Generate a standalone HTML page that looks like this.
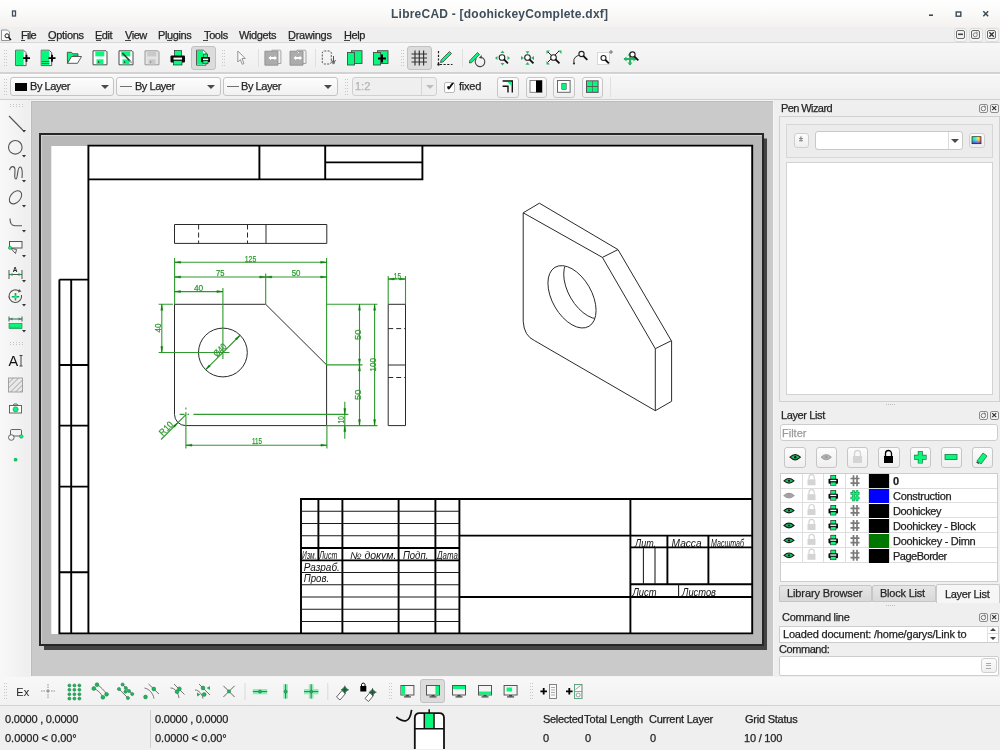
<!DOCTYPE html>
<html><head><meta charset="utf-8"><style>
*{margin:0;padding:0;box-sizing:border-box}
html,body{width:1000px;height:750px;overflow:hidden;background:#efefef;font-family:"Liberation Sans",sans-serif;font-size:11px;color:#2e2e2e}
.a{position:absolute}
.t{position:absolute;white-space:nowrap;line-height:1;will-change:transform;-webkit-text-stroke:0.25px currentColor}
.btn{position:absolute;border:1px solid #c6c6c6;border-radius:3px;background:linear-gradient(#fcfcfc,#efefef)}
.combo{position:absolute;border:1px solid #c4c4c4;border-radius:3px;background:linear-gradient(#fdfdfd,#f1f1f1)}
.arr{position:absolute;width:0;height:0;border-left:4px solid transparent;border-right:4px solid transparent;border-top:4px solid #4a4a4a}
.ul{position:absolute;height:1px;background:#555}
svg{position:absolute;overflow:visible}
</style></head><body>
<div class="a" style="left:0px;top:0px;width:1000px;height:27px;background:linear-gradient(#fefefe,#fbfbfa 40%,#f3f2f0)"></div>
<div class="t" id="t1" style="left:391.10px;top:8px;font-size:12px;font-weight:bold;color:#3f4e5c;-webkit-text-stroke:0;letter-spacing:0.232px">LibreCAD - [doohickeyComplete.dxf]</div>
<div class="a" style="left:0px;top:27px;width:1000px;height:15px;background:#efefef"></div>
<div class="a" style="left:0px;top:42px;width:1000px;height:1px;background:#d8d8d8"></div>
<div class="t" id="t2" style="left:20.64px;top:29.5px;font-size:11px;color:#262626;letter-spacing:-0.680px">File</div>
<div class="t" id="t3" style="left:48.00px;top:29.5px;font-size:11px;color:#262626;letter-spacing:-0.300px">Options</div>
<div class="t" id="t4" style="left:95.04px;top:29.5px;font-size:11px;color:#262626;letter-spacing:-0.480px">Edit</div>
<div class="t" id="t5" style="left:124.65px;top:29.5px;font-size:11px;color:#262626;letter-spacing:-0.450px">View</div>
<div class="t" id="t6" style="left:158.10px;top:29.5px;font-size:11px;color:#262626;letter-spacing:-0.400px">Plugins</div>
<div class="t" id="t7" style="left:203.65px;top:29.5px;font-size:11px;color:#262626;letter-spacing:-0.375px">Tools</div>
<div class="t" id="t8" style="left:239.00px;top:29.5px;font-size:11px;color:#262626;letter-spacing:-0.370px">Widgets</div>
<div class="t" id="t9" style="left:288.38px;top:29.5px;font-size:11px;color:#262626;letter-spacing:-0.275px">Drawings</div>
<div class="t" id="t10" style="left:343.70px;top:29.5px;font-size:11px;color:#262626;letter-spacing:-0.400px">Help</div>
<div class="ul" style="left:20.6px;top:40.2px;width:4.6px;height:1.1px;background:#444"></div>
<div class="ul" style="left:48.2px;top:40.2px;width:6.4px;height:1.1px;background:#444"></div>
<div class="ul" style="left:95.8px;top:40.2px;width:5px;height:1.1px;background:#444"></div>
<div class="ul" style="left:124.6px;top:40.2px;width:6px;height:1.1px;background:#444"></div>
<div class="ul" style="left:166.7px;top:40.2px;width:5.4px;height:1.1px;background:#444"></div>
<div class="ul" style="left:203px;top:40.2px;width:5.2px;height:1.1px;background:#444"></div>
<div class="ul" style="left:288.9px;top:40.2px;width:6px;height:1.1px;background:#444"></div>
<div class="ul" style="left:344.2px;top:40.2px;width:5.6px;height:1.1px;background:#444"></div>
<div class="a" style="left:0px;top:43px;width:1000px;height:29px;background:linear-gradient(#f7f7f7,#efefef)"></div>
<div class="a" style="left:0px;top:72px;width:1000px;height:1.5px;background:#d2d2d2"></div>
<div class="a" style="left:0px;top:73.5px;width:1000px;height:1px;background:#fdfdfd"></div>
<div class="a" style="left:0px;top:74.5px;width:1000px;height:24.5px;background:linear-gradient(#f7f7f7,#efefef)"></div>
<div class="a" style="left:0px;top:99px;width:1000px;height:1px;background:#cfcfcf"></div>
<div class="btn" style="left:191px;top:46px;width:25px;height:24px;background:#dcdcdc;border-color:#c2c2c2"></div>
<div class="btn" style="left:407px;top:46px;width:25px;height:24px;background:#dcdcdc;border-color:#c2c2c2"></div>
<div class="combo" style="left:10px;top:77px;width:104px;height:19px;"></div>
<div class="a" style="left:14.5px;top:82.5px;width:12.5px;height:8.5px;background:#050505"></div>
<div class="t" id="t11" style="left:30.00px;top:81px;font-size:11px;color:#262626;letter-spacing:-0.436px">By Layer</div>
<div class="arr" style="left:101px;top:85px;border-top-color:#4a4a4a"></div>
<div class="combo" style="left:115.5px;top:77px;width:105px;height:19px;"></div>
<div class="a" style="left:119.5px;top:86px;width:12px;height:1px;background:#707070"></div>
<div class="t" id="t12" style="left:134.52px;top:81px;font-size:11px;color:#262626;letter-spacing:-0.463px">By Layer</div>
<div class="arr" style="left:207px;top:85px;border-top-color:#4a4a4a"></div>
<div class="combo" style="left:222.5px;top:77px;width:115px;height:19px;"></div>
<div class="a" style="left:226.5px;top:86px;width:12px;height:1px;background:#707070"></div>
<div class="t" id="t13" style="left:241.38px;top:81px;font-size:11px;color:#262626;letter-spacing:-0.436px">By Layer</div>
<div class="arr" style="left:324px;top:85px;border-top-color:#4a4a4a"></div>
<div class="combo" style="left:352px;top:77px;width:84.5px;height:19px;background:#efefef;border-color:#d0d0d0"></div>
<div class="a" style="left:421px;top:78px;width:1px;height:17px;background:#d6d6d6"></div>
<div class="t" style="left:355px;top:81px;font-size:11px;color:#b4b4b4">1:2</div>
<div class="arr" style="left:425.5px;top:85px;border-top-color:#bdbdbd"></div>
<div class="a" style="left:444px;top:82px;width:11px;height:11px;background:#fff;border:1px solid #b8b8b8;border-radius:2px"></div>
<div class="t" style="left:445.5px;top:81px;font-size:11px;color:#111;font-weight:bold">&#10003;</div>
<div class="t" id="t14" style="left:459.00px;top:81px;font-size:11px;color:#262626;letter-spacing:-0.225px">fixed</div>
<div class="btn" style="left:497px;top:76.5px;width:21.5px;height:21px;"></div>
<div class="btn" style="left:525.5px;top:76.5px;width:21.5px;height:21px;"></div>
<div class="btn" style="left:553px;top:76.5px;width:21.5px;height:21px;"></div>
<div class="btn" style="left:581.5px;top:76.5px;width:21.5px;height:21px;"></div>
<div class="a" style="left:0px;top:100px;width:29.5px;height:577px;background:linear-gradient(to right,#f8f8f8,#eeeeee)"></div>
<div class="a" style="left:29.5px;top:100px;width:744px;height:577px;background:#f4f4f4"></div>
<div class="a" style="left:31px;top:101px;width:742px;height:575px;background:#bcbcbc"></div>
<div class="a" style="left:32px;top:102px;width:740.5px;height:573.5px;background:#cacaca"></div>
<svg style="left:31px;top:101px;will-change:transform" width="742" height="576" viewBox="31 101 742 576">
<rect x="44" y="138.5" width="723" height="511.5" fill="#444444"/>
<rect x="39" y="133" width="725" height="513" fill="#262626"/>
<rect x="41" y="135" width="721" height="509" fill="#d0d0d0"/>
<rect x="42" y="136" width="720" height="508" fill="#b8b8b8"/>
<rect x="51.3" y="146" width="701.5" height="488" fill="#ffffff"/>
<path d="M88.4,145.6 H752.2 V633.4 H88.4 Z M88.4,179.4 H422.4 V145.6 M259.4,145.6 V179.4 M325.2,145.6 V179.4 M325.2,162.4 H422.4 M59.4,279.6 H88.4 M59.4,279.6 V633.4 H88.4 M71.2,279.6 V633.4 M59.4,365 H88.4 M59.4,425.6 H88.4 M59.4,486.6 H88.4 M59.4,572.2 H88.4 M301,633.4 V499 H752.2 M342.4,499 V633.4 M398.6,499 V633.4 M435.4,499 V633.4 M459.4,499 V633.4 M630.4,499 V633.4 M318.4,499 V560.4 M301,548 H459.4 M301,560.4 H459.4 M459.4,535.6 H752.2 M459.4,597 H752.2 M630.4,547.4 H752.2 M630.4,584.2 H752.2 M667.4,535.6 V584.2 M708.4,535.6 V584.2" fill="none" stroke="#000" stroke-width="1.9"/>
<path d="M301,511.3 H459.4 M301,523.5 H459.4 M301,535.8 H459.4 M301,572.5 H459.4 M301,584.8 H459.4 M301,597 H459.4 M301,609.3 H459.4 M301,621.5 H459.4 M643.4,547.4 V584.2 M655,547.4 V584.2 M678.6,584.2 V597" fill="none" stroke="#1a1a1a" stroke-width="1.05"/>
<text x="302.1" y="559" textLength="14.299999999999955" lengthAdjust="spacingAndGlyphs" style="font-family:Liberation Sans,sans-serif;font-style:italic;fill:#111;font-size:10.5px">Изм.</text>
<text x="319.3" y="559" textLength="18.0" lengthAdjust="spacingAndGlyphs" style="font-family:Liberation Sans,sans-serif;font-style:italic;fill:#111;font-size:10.5px">Лист</text>
<text x="350.1" y="559" textLength="46.299999999999955" lengthAdjust="spacingAndGlyphs" style="font-family:Liberation Sans,sans-serif;font-style:italic;fill:#111;font-size:10px">№  докум.</text>
<text x="402.9" y="559" textLength="25.400000000000034" lengthAdjust="spacingAndGlyphs" style="font-family:Liberation Sans,sans-serif;font-style:italic;fill:#111;font-size:10px">Подп.</text>
<text x="437" y="559" textLength="20.80000000000001" lengthAdjust="spacingAndGlyphs" style="font-family:Liberation Sans,sans-serif;font-style:italic;fill:#111;font-size:10.5px">Дата</text>
<text x="303.7" y="570.5" textLength="36.10000000000002" lengthAdjust="spacingAndGlyphs" style="font-family:Liberation Sans,sans-serif;font-style:italic;fill:#111;font-size:10.5px">Разраб.</text>
<text x="303.7" y="582" textLength="25.400000000000034" lengthAdjust="spacingAndGlyphs" style="font-family:Liberation Sans,sans-serif;font-style:italic;fill:#111;font-size:10.5px">Пров.</text>
<text x="635" y="546.5" textLength="21" lengthAdjust="spacingAndGlyphs" style="font-family:Liberation Sans,sans-serif;font-style:italic;fill:#111;font-size:10px">Лит.</text>
<text x="671.6" y="546.5" textLength="30.0" lengthAdjust="spacingAndGlyphs" style="font-family:Liberation Sans,sans-serif;font-style:italic;fill:#111;font-size:10px">Масса</text>
<text x="711" y="546.5" textLength="33" lengthAdjust="spacingAndGlyphs" style="font-family:Liberation Sans,sans-serif;font-style:italic;fill:#111;font-size:10px">Масштаб</text>
<text x="632.4" y="595.8" textLength="24.200000000000045" lengthAdjust="spacingAndGlyphs" style="font-family:Liberation Sans,sans-serif;font-style:italic;fill:#111;font-size:10px">Лист</text>
<text x="682" y="595.8" textLength="34" lengthAdjust="spacingAndGlyphs" style="font-family:Liberation Sans,sans-serif;font-style:italic;fill:#111;font-size:10px">Листов</text>
<path d="M174.5,224.5 H326.8 V243.4 H174.5 Z M266,224.5 V243.4 M174.5,304.3 H265.7 L326.6,364.9 V425.6 H185.6 A11.2,11.2 0 0 1 174.5,414.4 Z M388.2,304.3 H405.5 V425.6 H388.2 Z M388.2,365 H405.5 M523.2,212.8 L539.4,203.2 L618,249.6 L602.4,257.4 Z M602.4,257.4 L655.3,348.7 L671.3,340.7 L618,249.6 M655.3,348.7 V410.7 L671.6,401.3 V340.7 M523.2,212.8 V321.3 Q524,336 534.7,340.7 L655.3,410.7" fill="none" stroke="#2a2a2a" stroke-width="1.0"/>
<circle cx="222.9" cy="352.5" r="24.4" fill="none" stroke="#2a2a2a" stroke-width="1.0"/>
<path d="M198.6,224.5 V243.4 M247.5,224.5 V243.4 M388.2,328.6 H405.5 M388.2,377.5 H405.5" fill="none" stroke="#2a2a2a" stroke-width="1.0" stroke-dasharray="5,3"/>
<defs><clipPath id="ec"><circle r="22.3" transform="matrix(1.056,0.6,0,1.229,572,296.8)"/></clipPath></defs>
<g transform="matrix(1.056,0.6,0,1.229,572,296.8)"><circle r="22.8" fill="none" stroke="#2a2a2a" stroke-width="1.0" vector-effect="non-scaling-stroke"/></g>
<g clip-path="url(#ec)"><g transform="matrix(1.056,0.6,0,1.229,587.8,287.8)"><circle r="22.8" fill="none" stroke="#2a2a2a" stroke-width="1.0" vector-effect="non-scaling-stroke"/></g></g>
<path d="M174.6,258 V304 M326.6,258 V364.9 M174.6,262.3 H326.6 M174.6,277 H326.6 M265.7,273.5 V304.3 M174.6,291.6 H222.9 M222.9,288 V359 M158.6,304.3 H173 M158.6,352.5 H229.5 M161.8,304.3 V352.5 M326.6,304.3 H377.5 M326.6,364.9 H362.5 M326.6,425.6 H377.5 M359.5,304.3 V425.6 M374.6,304.3 V425.6 M193.5,414.4 H348.3 M344.8,401.8 V438.7 M185.9,416 V448.5 M326.9,425.6 V448.5 M185.9,445.2 H326.9 M161,439.5 L185.7,414.8 M179.7,414.4 H184.5 M187.5,414.4 H189 M185.9,407.5 V409.5 M185.9,412 V416 M205.4,369.9 L240.4,335 M388.2,276 V304.3 M405.5,276 V304.3 M388.2,279 H405.5" fill="none" stroke="#2f9a2f" stroke-width="1.1"/>
<path d="M174.6,262.3 L180.6,261.3 L180.6,263.3 Z M326.6,262.3 L320.6,261.3 L320.6,263.3 Z M174.6,277 L180.6,276.0 L180.6,278.0 Z M265.7,277 L259.7,276.0 L259.7,278.0 Z M174.6,291.6 L180.6,290.6 L180.6,292.6 Z M222.9,291.6 L216.9,290.6 L216.9,292.6 Z M185.9,445.2 L191.9,444.2 L191.9,446.2 Z M326.9,445.2 L320.9,444.2 L320.9,446.2 Z M388.2,279 L394.2,278.0 L394.2,280.0 Z M405.5,279 L399.5,278.0 L399.5,280.0 Z M265.7,277 L271.7,276.0 L271.7,278.0 Z M326.6,277 L320.6,276.0 L320.6,278.0 Z M161.8,304.3 L160.8,310.3 L162.8,310.3 Z M161.8,352.5 L160.8,346.5 L162.8,346.5 Z M359.5,304.3 L358.5,310.3 L360.5,310.3 Z M359.5,364.9 L358.5,358.9 L360.5,358.9 Z M359.5,364.9 L358.5,370.9 L360.5,370.9 Z M359.5,425.6 L358.5,419.6 L360.5,419.6 Z M374.6,304.3 L373.6,310.3 L375.6,310.3 Z M374.6,425.6 L373.6,419.6 L375.6,419.6 Z M344.8,414.4 L343.8,408.4 L345.8,408.4 Z M344.8,425.6 L343.8,431.6 L345.8,431.6 Z M178.20,422.30 L173.25,425.84 L174.66,427.25 Z M240.20,335.10 L235.25,338.64 L236.66,340.05 Z M205.50,369.80 L210.45,366.26 L209.04,364.85 Z" fill="#0b820b" stroke="#0b820b" stroke-width="0.4"/>
<text transform="translate(250.5 258.3) rotate(0)" x="0" y="3.3" text-anchor="middle" textLength="11.5" lengthAdjust="spacingAndGlyphs" style="font-family:Liberation Sans,sans-serif;font-size:9.4px;fill:#2f9a2f;stroke:#2f9a2f;stroke-width:0.25">125</text>
<text transform="translate(220.2 272.8) rotate(0)" x="0" y="3.3" text-anchor="middle" textLength="8.4" lengthAdjust="spacingAndGlyphs" style="font-family:Liberation Sans,sans-serif;font-size:9.4px;fill:#2f9a2f;stroke:#2f9a2f;stroke-width:0.25">75</text>
<text transform="translate(296.1 272.8) rotate(0)" x="0" y="3.3" text-anchor="middle" textLength="8.8" lengthAdjust="spacingAndGlyphs" style="font-family:Liberation Sans,sans-serif;font-size:9.4px;fill:#2f9a2f;stroke:#2f9a2f;stroke-width:0.25">50</text>
<text transform="translate(198.6 287.2) rotate(0)" x="0" y="3.3" text-anchor="middle" textLength="9.3" lengthAdjust="spacingAndGlyphs" style="font-family:Liberation Sans,sans-serif;font-size:9.4px;fill:#2f9a2f;stroke:#2f9a2f;stroke-width:0.25">40</text>
<text transform="translate(397.4 275.2) rotate(0)" x="0" y="3.3" text-anchor="middle" textLength="7.2" lengthAdjust="spacingAndGlyphs" style="font-family:Liberation Sans,sans-serif;font-size:9.4px;fill:#2f9a2f;stroke:#2f9a2f;stroke-width:0.25">15</text>
<text transform="translate(257 440.5) rotate(0)" x="0" y="3.3" text-anchor="middle" textLength="9.9" lengthAdjust="spacingAndGlyphs" style="font-family:Liberation Sans,sans-serif;font-size:9.4px;fill:#2f9a2f;stroke:#2f9a2f;stroke-width:0.25">115</text>
<text transform="translate(157.7 328.1) rotate(-90)" x="0" y="3.3" text-anchor="middle" textLength="9" lengthAdjust="spacingAndGlyphs" style="font-family:Liberation Sans,sans-serif;font-size:9.4px;fill:#2f9a2f;stroke:#2f9a2f;stroke-width:0.25">40</text>
<text transform="translate(357.2 334.7) rotate(-90)" x="0" y="3.3" text-anchor="middle" textLength="10.5" lengthAdjust="spacingAndGlyphs" style="font-family:Liberation Sans,sans-serif;font-size:9.4px;fill:#2f9a2f;stroke:#2f9a2f;stroke-width:0.25">50</text>
<text transform="translate(357.2 394.7) rotate(-90)" x="0" y="3.3" text-anchor="middle" textLength="10.5" lengthAdjust="spacingAndGlyphs" style="font-family:Liberation Sans,sans-serif;font-size:9.4px;fill:#2f9a2f;stroke:#2f9a2f;stroke-width:0.25">50</text>
<text transform="translate(372.5 364.7) rotate(-90)" x="0" y="3.3" text-anchor="middle" textLength="13.5" lengthAdjust="spacingAndGlyphs" style="font-family:Liberation Sans,sans-serif;font-size:9.4px;fill:#2f9a2f;stroke:#2f9a2f;stroke-width:0.25">100</text>
<text transform="translate(340.6 419.8) rotate(-90)" x="0" y="3.3" text-anchor="middle" textLength="7.2" lengthAdjust="spacingAndGlyphs" style="font-family:Liberation Sans,sans-serif;font-size:9.4px;fill:#2f9a2f;stroke:#2f9a2f;stroke-width:0.25">10</text>
<text transform="translate(165.7 428) rotate(-45)" x="0" y="3.75" text-anchor="middle" textLength="15.5" lengthAdjust="spacingAndGlyphs" style="font-family:Liberation Sans,sans-serif;font-size:9.4px;fill:#2f9a2f;stroke:#2f9a2f;stroke-width:0.25">R10</text>
<text transform="translate(219.6 349.8) rotate(-45)" x="0" y="3.5" text-anchor="middle" textLength="14.5" lengthAdjust="spacingAndGlyphs" style="font-family:Liberation Sans,sans-serif;font-size:9.4px;fill:#2f9a2f;stroke:#2f9a2f;stroke-width:0.25">Ø40</text>
</svg>
<div class="a" style="left:774px;top:100px;width:226px;height:577px;background:#efefef"></div>
<div class="a" style="left:953.5px;top:27.5px;width:13.5px;height:14px;border:1px solid #dadada;border-radius:3px;background:#f7f7f7"></div>
<div class="a" style="left:956.2px;top:30px;width:8.4px;height:8.7px;border:1.2px solid #666;border-radius:2px;background:#f4f4f4"></div>
<div class="a" style="left:969px;top:27.5px;width:13.5px;height:14px;border:1px solid #dadada;border-radius:3px;background:#f7f7f7"></div>
<div class="a" style="left:971.2px;top:30px;width:8.4px;height:8.7px;border:1.2px solid #666;border-radius:2px;background:#f4f4f4"></div>
<div class="a" style="left:985px;top:27.5px;width:13.5px;height:14px;border:1px solid #dadada;border-radius:3px;background:#f7f7f7"></div>
<div class="a" style="left:987.4px;top:30px;width:8.4px;height:8.7px;border:1.2px solid #666;border-radius:2px;background:#f4f4f4"></div>
<div class="t" id="t15" style="left:781.35px;top:102.5px;font-size:11px;color:#262626;letter-spacing:-0.583px">Pen Wizard</div>
<div class="a" style="left:979px;top:104px;width:8.6px;height:8.6px;border:1px solid #8c8c8c;border-radius:2px;background:#f4f4f4"></div>
<div class="a" style="left:990px;top:104px;width:8.6px;height:8.6px;border:1px solid #8c8c8c;border-radius:2px;background:#f4f4f4"></div>
<div class="a" style="left:778.5px;top:116px;width:221px;height:286px;border:1px solid #d0d0d0;background:#efefef"></div>
<div class="a" style="left:786px;top:123.5px;width:206.5px;height:34.5px;border:1px solid #d6d6d6;background:#ececec"></div>
<div class="btn" style="left:794px;top:132.5px;width:15px;height:15px;border-color:#cfcfcf"></div>
<div class="t" style="left:798.5px;top:135px;font-size:7px;color:#666">&#177;</div>
<div class="a" style="left:814.5px;top:131px;width:148.5px;height:19px;background:#fff;border:1px solid #c8c8c8;border-radius:3px"></div>
<div class="a" style="left:947.5px;top:132px;width:1px;height:17px;background:#dcdcdc"></div>
<div class="arr" style="left:950.5px;top:139px;border-top-color:#4a4a4a"></div>
<div class="btn" style="left:969px;top:132.5px;width:15.5px;height:15.5px;border-color:#cfcfcf"></div>
<div class="a" style="left:786px;top:162px;width:206.5px;height:232.5px;background:#fff;border:1px solid #d2d2d2"></div>
<div class="a" style="left:886px;top:404px;width:1px;height:1px;background:#bcbcbc"></div>
<div class="a" style="left:888px;top:404px;width:1px;height:1px;background:#bcbcbc"></div>
<div class="a" style="left:890px;top:404px;width:1px;height:1px;background:#bcbcbc"></div>
<div class="a" style="left:892px;top:404px;width:1px;height:1px;background:#bcbcbc"></div>
<div class="a" style="left:894px;top:404px;width:1px;height:1px;background:#bcbcbc"></div>
<div class="t" id="t16" style="left:781.35px;top:410px;font-size:11px;color:#262626;letter-spacing:-0.383px">Layer List</div>
<div class="a" style="left:979px;top:411px;width:8.6px;height:8.6px;border:1px solid #8c8c8c;border-radius:2px;background:#f4f4f4"></div>
<div class="a" style="left:990px;top:411px;width:8.6px;height:8.6px;border:1px solid #8c8c8c;border-radius:2px;background:#f4f4f4"></div>
<div class="a" style="left:780px;top:424px;width:218px;height:17px;background:#fff;border:1px solid #cdcdcd;border-radius:3px"></div>
<div class="t" id="t17" style="left:781.76px;top:427.5px;font-size:11px;color:#9a9a9a;letter-spacing:0.000px">Filter</div>
<div class="btn" style="left:784.3px;top:446.6px;width:21.3px;height:21px;"></div>
<div class="btn" style="left:815.5px;top:446.6px;width:21.5px;height:21px;"></div>
<div class="btn" style="left:847px;top:446.6px;width:21.4px;height:21px;"></div>
<div class="btn" style="left:878px;top:446.6px;width:21.5px;height:21px;"></div>
<div class="btn" style="left:909.6px;top:446.6px;width:21.4px;height:21px;"></div>
<div class="btn" style="left:940.6px;top:446.6px;width:21.4px;height:21px;"></div>
<div class="btn" style="left:972.4px;top:446.6px;width:20.6px;height:21px;"></div>
<div class="a" style="left:780px;top:473px;width:218px;height:109px;background:#fff;border:1px solid #cdcdcd"></div>
<div class="a" style="left:781px;top:487.5px;width:216px;height:1px;background:#dedede"></div>
<div class="a" style="left:801.5px;top:473.5px;width:1px;height:15px;background:#dedede"></div>
<div class="a" style="left:823.4px;top:473.5px;width:1px;height:15px;background:#dedede"></div>
<div class="a" style="left:845.4px;top:473.5px;width:1px;height:15px;background:#dedede"></div>
<div class="a" style="left:867.7px;top:473.5px;width:1px;height:15px;background:#dedede"></div>
<div class="a" style="left:889.3px;top:473.5px;width:1px;height:15px;background:#dedede"></div>
<div class="a" style="left:868.5px;top:474.0px;width:20.5px;height:14px;background:#000"></div>
<div class="t" style="left:892.5px;top:476.0px;font-size:11px;color:#1e1e1e;font-weight:bold">0</div>
<div class="a" style="left:781px;top:502.4px;width:216px;height:1px;background:#dedede"></div>
<div class="a" style="left:801.5px;top:488.4px;width:1px;height:15px;background:#dedede"></div>
<div class="a" style="left:823.4px;top:488.4px;width:1px;height:15px;background:#dedede"></div>
<div class="a" style="left:845.4px;top:488.4px;width:1px;height:15px;background:#dedede"></div>
<div class="a" style="left:867.7px;top:488.4px;width:1px;height:15px;background:#dedede"></div>
<div class="a" style="left:889.3px;top:488.4px;width:1px;height:15px;background:#dedede"></div>
<div class="a" style="left:868.5px;top:488.9px;width:20.5px;height:14px;background:#0000ff"></div>
<div class="t" id="t18" style="left:892.65px;top:490.9px;font-size:11px;color:#1e1e1e;;letter-spacing:-0.276px">Construction</div>
<div class="a" style="left:781px;top:517.3px;width:216px;height:1px;background:#dedede"></div>
<div class="a" style="left:801.5px;top:503.3px;width:1px;height:15px;background:#dedede"></div>
<div class="a" style="left:823.4px;top:503.3px;width:1px;height:15px;background:#dedede"></div>
<div class="a" style="left:845.4px;top:503.3px;width:1px;height:15px;background:#dedede"></div>
<div class="a" style="left:867.7px;top:503.3px;width:1px;height:15px;background:#dedede"></div>
<div class="a" style="left:889.3px;top:503.3px;width:1px;height:15px;background:#dedede"></div>
<div class="a" style="left:868.5px;top:503.8px;width:20.5px;height:14px;background:#000"></div>
<div class="t" id="t19" style="left:892.50px;top:505.8px;font-size:11px;color:#1e1e1e;;letter-spacing:-0.347px">Doohickey</div>
<div class="a" style="left:781px;top:532.2px;width:216px;height:1px;background:#dedede"></div>
<div class="a" style="left:801.5px;top:518.2px;width:1px;height:15px;background:#dedede"></div>
<div class="a" style="left:823.4px;top:518.2px;width:1px;height:15px;background:#dedede"></div>
<div class="a" style="left:845.4px;top:518.2px;width:1px;height:15px;background:#dedede"></div>
<div class="a" style="left:867.7px;top:518.2px;width:1px;height:15px;background:#dedede"></div>
<div class="a" style="left:889.3px;top:518.2px;width:1px;height:15px;background:#dedede"></div>
<div class="a" style="left:868.5px;top:518.7px;width:20.5px;height:14px;background:#000"></div>
<div class="t" id="t20" style="left:892.50px;top:520.7px;font-size:11px;color:#1e1e1e;;letter-spacing:-0.328px">Doohickey - Block</div>
<div class="a" style="left:781px;top:547.1px;width:216px;height:1px;background:#dedede"></div>
<div class="a" style="left:801.5px;top:533.1px;width:1px;height:15px;background:#dedede"></div>
<div class="a" style="left:823.4px;top:533.1px;width:1px;height:15px;background:#dedede"></div>
<div class="a" style="left:845.4px;top:533.1px;width:1px;height:15px;background:#dedede"></div>
<div class="a" style="left:867.7px;top:533.1px;width:1px;height:15px;background:#dedede"></div>
<div class="a" style="left:889.3px;top:533.1px;width:1px;height:15px;background:#dedede"></div>
<div class="a" style="left:868.5px;top:533.6px;width:20.5px;height:14px;background:#007800"></div>
<div class="t" id="t21" style="left:892.50px;top:535.6px;font-size:11px;color:#1e1e1e;;letter-spacing:-0.278px">Doohickey - Dimn</div>
<div class="a" style="left:781px;top:562.0px;width:216px;height:1px;background:#dedede"></div>
<div class="a" style="left:801.5px;top:548.0px;width:1px;height:15px;background:#dedede"></div>
<div class="a" style="left:823.4px;top:548.0px;width:1px;height:15px;background:#dedede"></div>
<div class="a" style="left:845.4px;top:548.0px;width:1px;height:15px;background:#dedede"></div>
<div class="a" style="left:867.7px;top:548.0px;width:1px;height:15px;background:#dedede"></div>
<div class="a" style="left:889.3px;top:548.0px;width:1px;height:15px;background:#dedede"></div>
<div class="a" style="left:868.5px;top:548.5px;width:20.5px;height:14px;background:#000"></div>
<div class="t" id="t22" style="left:892.50px;top:550.5px;font-size:11px;color:#1e1e1e;;letter-spacing:-0.493px">PageBorder</div>
<div class="a" style="left:779px;top:584.5px;width:93px;height:17px;background:linear-gradient(#e6e6e6,#d8d8d8);border:1px solid #c6c6c6;border-radius:2px 2px 0 0"></div>
<div class="a" style="left:872px;top:584.5px;width:64px;height:17px;background:linear-gradient(#e6e6e6,#d8d8d8);border:1px solid #c6c6c6;border-radius:2px 2px 0 0"></div>
<div class="a" style="left:935.5px;top:583.5px;width:64.5px;height:19.5px;background:#f6f6f6;border:1px solid #cacaca;border-bottom:none;border-radius:2px 2px 0 0"></div>
<div class="t" id="t23" style="left:786.54px;top:587.5px;font-size:11px;color:#262626;letter-spacing:-0.116px">Library Browser</div>
<div class="t" id="t24" style="left:879.78px;top:587.5px;font-size:11px;color:#262626;letter-spacing:-0.216px">Block List</div>
<div class="t" id="t25" style="left:944.59px;top:589px;font-size:11px;color:#262626;letter-spacing:-0.334px">Layer List</div>
<div class="a" style="left:886px;top:605px;width:1px;height:1px;background:#bcbcbc"></div>
<div class="a" style="left:888px;top:605px;width:1px;height:1px;background:#bcbcbc"></div>
<div class="a" style="left:890px;top:605px;width:1px;height:1px;background:#bcbcbc"></div>
<div class="a" style="left:892px;top:605px;width:1px;height:1px;background:#bcbcbc"></div>
<div class="a" style="left:894px;top:605px;width:1px;height:1px;background:#bcbcbc"></div>
<div class="t" id="t26" style="left:781.65px;top:611.5px;font-size:11px;color:#262626;letter-spacing:-0.286px">Command line</div>
<div class="a" style="left:979px;top:613px;width:8.6px;height:8.6px;border:1px solid #8c8c8c;border-radius:2px;background:#f4f4f4"></div>
<div class="a" style="left:990px;top:613px;width:8.6px;height:8.6px;border:1px solid #8c8c8c;border-radius:2px;background:#f4f4f4"></div>
<div class="a" style="left:779px;top:626px;width:220px;height:17px;background:#fff;border:1px solid #cdcdcd"></div>
<div class="t" id="t27" style="left:782.70px;top:629px;font-size:11px;color:#1e1e1e;letter-spacing:-0.188px">Loaded document: /home/garys/Link to</div>
<div class="a" style="left:987px;top:627px;width:11px;height:15px;background:#fff;border-left:1px solid #e2e2e2"></div>
<div class="a" style="left:988px;top:632.8px;width:10px;height:1.6px;background:#d8d8d8"></div>
<div class="arr" style="left:990px;top:627.5px;border-left-width:3px;border-right-width:3px;border-top:none;border-bottom:3px solid #444"></div>
<div class="arr" style="left:990px;top:636.5px;border-left-width:3px;border-right-width:3px;border-top-width:3px;border-top-color:#444"></div>
<div class="t" id="t28" style="left:779.12px;top:644px;font-size:11px;color:#262626;letter-spacing:-0.438px">Command:</div>
<div class="a" style="left:779px;top:656px;width:220px;height:20px;background:#fff;border:1px solid #cdcdcd;border-radius:2px"></div>
<div class="btn" style="left:981.2px;top:658px;width:15.6px;height:15.2px;border-color:#cfcfcf"></div>
<div class="a" style="left:986px;top:662.5px;width:5px;height:1px;background:#aaa"></div>
<div class="a" style="left:986px;top:665px;width:5px;height:1px;background:#aaa"></div>
<div class="a" style="left:986px;top:667.5px;width:5px;height:1px;background:#aaa"></div>
<div class="a" style="left:0px;top:677px;width:1000px;height:28px;background:linear-gradient(#f8f8f8,#f1f1f1)"></div>
<div class="a" style="left:0px;top:705px;width:1000px;height:1px;background:#d3d3d3"></div>
<div class="a" style="left:0px;top:706px;width:1000px;height:44px;background:#efefef"></div>
<div class="btn" style="left:420.4px;top:679.4px;width:24.6px;height:23.6px;background:#dcdcdc;border-color:#c2c2c2"></div>
<div class="t" id="t29" style="left:5.00px;top:713.5px;font-size:11px;color:#222;letter-spacing:-0.222px">0.0000 , 0.0000</div>
<div class="t" id="t30" style="left:5.00px;top:732.5px;font-size:11px;color:#222;letter-spacing:-0.017px">0.0000 &lt; 0.00°</div>
<div class="a" style="left:150px;top:710px;width:1px;height:38px;background:#cfcfcf"></div>
<div class="t" id="t31" style="left:155.00px;top:713.5px;font-size:11px;color:#222;letter-spacing:-0.222px">0.0000 , 0.0000</div>
<div class="t" id="t32" style="left:155.00px;top:732.5px;font-size:11px;color:#222;letter-spacing:-0.017px">0.0000 &lt; 0.00°</div>
<div class="t" id="t33" style="left:542.64px;top:713.5px;font-size:11px;color:#222;letter-spacing:-0.311px">Selected</div>
<div class="t" id="t34" style="left:584.30px;top:713.5px;font-size:11px;color:#222;letter-spacing:-0.065px">Total Length</div>
<div class="t" id="t35" style="left:649.43px;top:713.5px;font-size:11px;color:#222;letter-spacing:-0.254px">Current Layer</div>
<div class="t" id="t36" style="left:744.65px;top:713.5px;font-size:11px;color:#222;letter-spacing:-0.237px">Grid Status</div>
<div class="t" style="left:543px;top:733px;font-size:11px;color:#222">0</div>
<div class="t" style="left:584.5px;top:733px;font-size:11px;color:#222">0</div>
<div class="t" style="left:650px;top:733px;font-size:11px;color:#222">0</div>
<div class="t" id="t37" style="left:744.35px;top:733px;font-size:11px;color:#222;letter-spacing:-0.207px">10 / 100</div>
<svg style="left:0;top:0" width="1000" height="750" viewBox="0 0 1000 750">
<rect x="4" y="50" width="1" height="1" fill="#c8c8c8"/><rect x="6" y="50" width="1" height="1" fill="#c8c8c8"/>
<rect x="4" y="53" width="1" height="1" fill="#c8c8c8"/><rect x="6" y="53" width="1" height="1" fill="#c8c8c8"/>
<rect x="4" y="56" width="1" height="1" fill="#c8c8c8"/><rect x="6" y="56" width="1" height="1" fill="#c8c8c8"/>
<rect x="4" y="59" width="1" height="1" fill="#c8c8c8"/><rect x="6" y="59" width="1" height="1" fill="#c8c8c8"/>
<rect x="4" y="62" width="1" height="1" fill="#c8c8c8"/><rect x="6" y="62" width="1" height="1" fill="#c8c8c8"/>
<rect x="4" y="65" width="1" height="1" fill="#c8c8c8"/><rect x="6" y="65" width="1" height="1" fill="#c8c8c8"/>
<rect x="222" y="50" width="1" height="1" fill="#c8c8c8"/><rect x="224" y="50" width="1" height="1" fill="#c8c8c8"/>
<rect x="222" y="53" width="1" height="1" fill="#c8c8c8"/><rect x="224" y="53" width="1" height="1" fill="#c8c8c8"/>
<rect x="222" y="56" width="1" height="1" fill="#c8c8c8"/><rect x="224" y="56" width="1" height="1" fill="#c8c8c8"/>
<rect x="222" y="59" width="1" height="1" fill="#c8c8c8"/><rect x="224" y="59" width="1" height="1" fill="#c8c8c8"/>
<rect x="222" y="62" width="1" height="1" fill="#c8c8c8"/><rect x="224" y="62" width="1" height="1" fill="#c8c8c8"/>
<rect x="222" y="65" width="1" height="1" fill="#c8c8c8"/><rect x="224" y="65" width="1" height="1" fill="#c8c8c8"/>
<rect x="401" y="50" width="1" height="1" fill="#c8c8c8"/><rect x="403" y="50" width="1" height="1" fill="#c8c8c8"/>
<rect x="401" y="53" width="1" height="1" fill="#c8c8c8"/><rect x="403" y="53" width="1" height="1" fill="#c8c8c8"/>
<rect x="401" y="56" width="1" height="1" fill="#c8c8c8"/><rect x="403" y="56" width="1" height="1" fill="#c8c8c8"/>
<rect x="401" y="59" width="1" height="1" fill="#c8c8c8"/><rect x="403" y="59" width="1" height="1" fill="#c8c8c8"/>
<rect x="401" y="62" width="1" height="1" fill="#c8c8c8"/><rect x="403" y="62" width="1" height="1" fill="#c8c8c8"/>
<rect x="401" y="65" width="1" height="1" fill="#c8c8c8"/><rect x="403" y="65" width="1" height="1" fill="#c8c8c8"/>
<rect x="4" y="79" width="1" height="1" fill="#c8c8c8"/><rect x="6" y="79" width="1" height="1" fill="#c8c8c8"/>
<rect x="4" y="82" width="1" height="1" fill="#c8c8c8"/><rect x="6" y="82" width="1" height="1" fill="#c8c8c8"/>
<rect x="4" y="85" width="1" height="1" fill="#c8c8c8"/><rect x="6" y="85" width="1" height="1" fill="#c8c8c8"/>
<rect x="4" y="88" width="1" height="1" fill="#c8c8c8"/><rect x="6" y="88" width="1" height="1" fill="#c8c8c8"/>
<rect x="4" y="91" width="1" height="1" fill="#c8c8c8"/><rect x="6" y="91" width="1" height="1" fill="#c8c8c8"/>
<rect x="4" y="94" width="1" height="1" fill="#c8c8c8"/><rect x="6" y="94" width="1" height="1" fill="#c8c8c8"/>
<rect x="345" y="79" width="1" height="1" fill="#c8c8c8"/><rect x="347" y="79" width="1" height="1" fill="#c8c8c8"/>
<rect x="345" y="82" width="1" height="1" fill="#c8c8c8"/><rect x="347" y="82" width="1" height="1" fill="#c8c8c8"/>
<rect x="345" y="85" width="1" height="1" fill="#c8c8c8"/><rect x="347" y="85" width="1" height="1" fill="#c8c8c8"/>
<rect x="345" y="88" width="1" height="1" fill="#c8c8c8"/><rect x="347" y="88" width="1" height="1" fill="#c8c8c8"/>
<rect x="345" y="91" width="1" height="1" fill="#c8c8c8"/><rect x="347" y="91" width="1" height="1" fill="#c8c8c8"/>
<rect x="345" y="94" width="1" height="1" fill="#c8c8c8"/><rect x="347" y="94" width="1" height="1" fill="#c8c8c8"/>
<rect x="258" y="49" width="1" height="18" fill="#e0e0e0"/>
<rect x="315" y="49" width="1" height="18" fill="#e0e0e0"/>
<rect x="462" y="49" width="1" height="18" fill="#e0e0e0"/>
<rect x="610" y="77" width="1" height="20" fill="#e0e0e0"/>
<path d="M15.6,50.2 H23.6 L26.1,52.7 V65.60000000000001 H15.6 Z" fill="#fff" stroke="#4a4a4a" stroke-width="0.9"/>
<rect x="16.1" y="50.7" width="7.6" height="14.4" fill="#0af77d"/>
<path d="M23,58.2 H30 M26.5,54.7 V61.7" stroke="#000" stroke-width="1.8"/>
<path d="M41.2,50.2 H49.2 L51.7,52.7 V65.60000000000001 H41.2 Z" fill="#fff" stroke="#4a4a4a" stroke-width="0.9"/>
<rect x="41.7" y="50.7" width="7.6" height="14.4" fill="#0af77d"/>
<rect x="41.7" y="61" width="7.6" height="1" fill="#0a8a40"/><rect x="41.7" y="63" width="7.6" height="1" fill="#0a8a40"/>
<path d="M48.5,58.2 H55.5 M52,54.7 V61.7" stroke="#000" stroke-width="1.8"/>
<path d="M67.3,52.3 H71.5 L72.8,53.8 H78 V56 H73 L67.5,63.3 Z" fill="#0af77d" stroke="#4a4a4a" stroke-width="0.9"/>
<path d="M67.5,63.3 L71.5,56.5 H81.5 L77.5,63.3 Z" fill="#fff" stroke="#4a4a4a" stroke-width="0.9"/>
<path d="M93,50.8 H106 L107,51.8 V64.8 H93 Z" fill="#fff" stroke="#4a4a4a" stroke-width="1"/>
<rect x="95.3" y="51.4" width="9" height="5" fill="#0af77d"/>
<rect x="96.5" y="59.3" width="7" height="5" fill="#0af77d"/>
<rect x="98" y="61.0" width="1.2" height="2" fill="#4a4a4a"/>
<path d="M119,50.8 H132 L133,51.8 V64.8 H119 Z" fill="#fff" stroke="#4a4a4a" stroke-width="1"/>
<rect x="121.3" y="51.4" width="9" height="5" fill="#0af77d"/>
<rect x="122.5" y="59.3" width="7" height="5" fill="#0af77d"/>
<rect x="124" y="61.0" width="1.2" height="2" fill="#4a4a4a"/>
<path d="M122.3,53 L130.5,61.5" stroke="#333" stroke-width="1.6"/><path d="M129.5,60.5 L131.8,63" stroke="#aaa" stroke-width="1.4"/>
<path d="M145,50.8 H158 L159,51.8 V64.8 H145 Z" fill="#e4e4e4" stroke="#9a9a9a" stroke-width="1"/>
<rect x="147.3" y="51.4" width="9" height="5" fill="#c9c9c9"/>
<rect x="148.5" y="59.3" width="7" height="5" fill="#c9c9c9"/>
<rect x="150" y="61.0" width="1.2" height="2" fill="#9a9a9a"/>
<rect x="174.5" y="50.5" width="7" height="6" fill="#0af77d" stroke="#111" stroke-width="0.6"/>
<rect x="170.5" y="55.5" width="14.5" height="7" rx="1" fill="#0b0b0b"/>
<rect x="173.5" y="57.6" width="8.5" height="2" fill="#fff"/>
<rect x="173.5" y="60.5" width="8.5" height="4.5" fill="#0af77d" stroke="#111" stroke-width="0.6"/>
<path d="M196.5,50.2 H203.5 L206.0,52.7 V65.2 H196.5 Z" fill="#fff" stroke="#4a4a4a" stroke-width="0.9"/>
<rect x="197.0" y="50.7" width="6" height="14" fill="#0af77d"/>
<rect x="203.5" y="54" width="4" height="3.5" fill="#0af77d" stroke="#111" stroke-width="0.6"/>
<rect x="201" y="57" width="9" height="5.2" rx="0.8" fill="#0b0b0b"/>
<rect x="203" y="58.6" width="5.2" height="1.4" fill="#fff"/>
<rect x="203" y="60.4" width="5" height="3.4" fill="#0af77d" stroke="#111" stroke-width="0.5"/>
<path d="M237.8,51 L245.3,58.5 H242 L244,63.5 L242.3,64.3 L240.3,59.5 L237.8,62 Z" fill="#fafafa" stroke="#8a8a8a" stroke-width="0.9"/>
<path d="M271.9,50.2 H280.4 L280.9,51.2 V63.5 H271.9 Z" fill="#f0f0f0" stroke="#9c9c9c" stroke-width="0.9"/>
<path d="M264.9,51.2 H277.9 V65.2 H264.9 Z" fill="#acacac" stroke="#8e8e8e" stroke-width="0.9"/>
<path d="M268.5,58 L271,55.8 V57 H274.5 V55.8 L277,58 L274.5,60.2 V59 H271 V60.2 Z" fill="#fff"/>
<path d="M297,50.2 H305.5 L306,51.2 V63.5 H297 Z" fill="#f0f0f0" stroke="#9c9c9c" stroke-width="0.9"/>
<path d="M290,51.2 H303 V65.2 H290 Z" fill="#acacac" stroke="#8e8e8e" stroke-width="0.9"/>
<path d="M293.6,58 L296.1,55.8 V57 H299.6 V55.8 L302.1,58 L299.6,60.2 V59 H296.1 V60.2 Z" fill="#fff"/>
<path d="M297.5,51.5 L299,53" stroke="#fff" stroke-width="0.8"/>
<rect x="322.3" y="51" width="9" height="13" rx="2" fill="none" stroke="#555" stroke-width="1" stroke-dasharray="2,1.3"/>
<path d="M333.5,56 V62 M331.5,60 L333.5,63.5 L335.5,60" fill="none" stroke="#555" stroke-width="1"/>
<circle cx="333.5" cy="63" r="1.3" fill="#777"/>
<rect x="351.5" y="50.7" width="10.5" height="12.8" fill="#0af77d" stroke="#4a4a4a" stroke-width="0.9"/>
<rect x="347.5" y="52.5" width="7" height="12.5" fill="#0af77d" stroke="#4a4a4a" stroke-width="0.9"/>
<rect x="377.5" y="50.7" width="10.5" height="12.8" fill="#0af77d" stroke="#4a4a4a" stroke-width="0.9"/>
<rect x="373.5" y="52.5" width="7" height="12.5" fill="#0af77d" stroke="#4a4a4a" stroke-width="0.9"/>
<path d="M378,58.5 H386 M382,54.5 V62.5" stroke="#000" stroke-width="2"/>
<path d="M411.5,54 H427 M411.5,58 H427 M411.5,62 H427 M415,50.5 V65.5 M419.3,50.5 V65.5 M423.6,50.5 V65.5" stroke="#333" stroke-width="1.15"/>
<path d="M438.5,51 V64.5 H452.5" fill="none" stroke="#222" stroke-width="1.2" stroke-dasharray="2.2,1.5"/>
<circle cx="438.5" cy="64.5" r="1.2" fill="#222"/>
<path d="M441,60 L449.5,51.5 L451.5,53.5 L443,62 L440.5,62.5 Z" fill="#0af77d" stroke="#444" stroke-width="0.8"/>
<path d="M469.8,60.5 L477.5,52.5 L479.5,54.5 L471.8,62.5 L469.5,63 Z" fill="#0af77d" stroke="#444" stroke-width="0.8"/>
<path d="M476.5,58.5 A4.8,4.8 0 1 0 481.5,57.2" fill="none" stroke="#444" stroke-width="1.1"/><path d="M481.5,55 L482,58.5 L478.8,58" fill="#444"/>
<path d="M502.5,50.5 L500.5,53 H504.5 Z M502.5,65.5 L500.5,63 H504.5 Z M495,58 L497.5,56 V60 Z M510,58 L507.5,56 V60 Z" fill="#27b560"/>
<circle cx="502" cy="57.5" r="2.8" fill="#fff" stroke="#222" stroke-width="1.1"/>
<path d="M503.96,59.46 L507.96,63.46" stroke="#111" stroke-width="1.8"/>
<path d="M527.5,54 L525.5,51.3 H529.5 Z M527.5,62 L525.5,64.7 H529.5 Z M524,58 L521,56 V60 Z M531,58 L534,56 V60 Z" fill="#27b560"/>
<circle cx="527.5" cy="57.5" r="2.8" fill="#fff" stroke="#222" stroke-width="1.1"/>
<path d="M529.46,59.46 L533.46,63.46" stroke="#111" stroke-width="1.8"/>
<path d="M547,51 L559,63 M559,51 L547,63" stroke="#222" stroke-width="1"/>
<path d="M546.5,50.5 H550 L546.5,54 Z M561.5,50.5 H558 L561.5,54 Z M546.5,64.5 H550 L546.5,61 Z" fill="#27b560"/>
<circle cx="553.5" cy="57.5" r="2.8" fill="#fff" stroke="#222" stroke-width="1.1"/>
<path d="M555.46,59.46 L559.46,63.46" stroke="#111" stroke-width="1.8"/>
<path d="M574,63 A6,6 0 0 1 581.5,55.5" fill="none" stroke="#333" stroke-width="1"/><circle cx="574" cy="63.5" r="1.1" fill="#333"/>
<circle cx="581.5" cy="54" r="2.6" fill="#fff" stroke="#222" stroke-width="1.1"/>
<path d="M583.32,55.82 L587.32,59.82" stroke="#111" stroke-width="1.8"/>
<rect x="597.5" y="52.5" width="12" height="12" fill="#fff" stroke="#d0d0d0" stroke-width="0.8"/>
<path d="M611,50 V54 M609,52 H613" stroke="#555" stroke-width="0.8"/>
<circle cx="603.5" cy="58" r="2.5" fill="#fff" stroke="#222" stroke-width="1.1"/>
<path d="M605.25,59.75 L608.85,63.35" stroke="#111" stroke-width="1.8"/>
<path d="M624,59 H636 M630,53 V65" stroke="#27b560" stroke-width="2"/>
<path d="M623.5,59 L626.5,56.5 V61.5 Z M636.5,59 L633.5,56.5 V61.5 Z M630,65.5 L627.5,62.5 H632.5 Z M630,52.5 L627.5,55.5 H632.5 Z" fill="#27b560"/>
<circle cx="632.5" cy="54.5" r="2.6" fill="#fff" stroke="#222" stroke-width="1.1"/>
<path d="M634.32,56.32 L638.32,60.32" stroke="#111" stroke-width="1.8"/>
<path d="M958,34.3 H963" stroke="#444" stroke-width="1.6"/>
<circle cx="975.3" cy="34.8" r="2" fill="none" stroke="#777" stroke-width="0.9"/><path d="M976,31.8 L978,33.2" stroke="#777" stroke-width="0.8"/>
<path d="M989.4,32.2 L993.8,36.8 M993.8,32.2 L989.4,36.8" stroke="#333" stroke-width="1.3"/>
<circle cx="983.4" cy="108.6" r="2.2" fill="none" stroke="#777" stroke-width="1"/><path d="M984,105.5 L986,107" stroke="#777" stroke-width="0.8"/>
<path d="M992.2,106.2 L996.2,110.2 M996.2,106.2 L992.2,110.2" stroke="#333" stroke-width="1.2"/>
<circle cx="983.4" cy="415.6" r="2.2" fill="none" stroke="#777" stroke-width="1"/><path d="M984,412.5 L986,414" stroke="#777" stroke-width="0.8"/>
<path d="M992.2,413.2 L996.2,417.2 M996.2,413.2 L992.2,417.2" stroke="#333" stroke-width="1.2"/>
<circle cx="983.4" cy="617.6" r="2.2" fill="none" stroke="#777" stroke-width="1"/><path d="M984,614.5 L986,616" stroke="#777" stroke-width="0.8"/>
<path d="M992.2,615.2 L996.2,619.2 M996.2,615.2 L992.2,619.2" stroke="#333" stroke-width="1.2"/>
<defs><linearGradient id="rb" x1="0" y1="0" x2="1" y2="0"><stop offset="0" stop-color="#00ff00"/><stop offset="0.35" stop-color="#00ffff"/><stop offset="0.7" stop-color="#ffff00"/><stop offset="1" stop-color="#ff6000"/></linearGradient><linearGradient id="rb2" x1="0" y1="0" x2="0" y2="1"><stop offset="0" stop-color="#fff" stop-opacity="0"/><stop offset="1" stop-color="#4000ff" stop-opacity="0.85"/></linearGradient></defs>
<rect x="972" y="136.7" width="9" height="7" fill="url(#rb)"/><rect x="972" y="136.7" width="9" height="7" fill="url(#rb2)"/><rect x="972" y="136.7" width="9" height="7" fill="none" stroke="#222" stroke-width="0.7"/>
<path d="M502.6,81 H512.3 V92.4 M502.6,86.2 H508 V92.4" fill="none" stroke="#111" stroke-width="1.4"/>
<path d="M507.5,82 H511.5 V86 Z" fill="#0af77d"/>
<rect x="530" y="80.5" width="12" height="11.8" fill="#fff" stroke="#777" stroke-width="0.9"/><rect x="536" y="80.5" width="6" height="11.8" fill="#000"/>
<rect x="557.5" y="80.5" width="12.6" height="11.8" fill="#fff" stroke="#666" stroke-width="1"/>
<rect x="561.8" y="83.4" width="4.4" height="6" fill="#0af77d" stroke="#333" stroke-width="0.5"/>
<rect x="586" y="80.3" width="12.6" height="12.6" fill="#555"/>
<rect x="587" y="81.3" width="5" height="4.8" fill="#0af77d"/>
<rect x="592.6" y="81.3" width="5" height="4.8" fill="#0af77d"/>
<rect x="587" y="87" width="5" height="4.8" fill="#0af77d"/>
<rect x="592.6" y="87" width="5" height="4.8" fill="#0af77d"/>
<rect x="10" y="104" width="1" height="1" fill="#c4c4c4"/><rect x="10" y="106" width="1" height="1" fill="#c4c4c4"/>
<rect x="10" y="342" width="1" height="1" fill="#c4c4c4"/><rect x="10" y="344" width="1" height="1" fill="#c4c4c4"/>
<rect x="13" y="104" width="1" height="1" fill="#c4c4c4"/><rect x="13" y="106" width="1" height="1" fill="#c4c4c4"/>
<rect x="13" y="342" width="1" height="1" fill="#c4c4c4"/><rect x="13" y="344" width="1" height="1" fill="#c4c4c4"/>
<rect x="16" y="104" width="1" height="1" fill="#c4c4c4"/><rect x="16" y="106" width="1" height="1" fill="#c4c4c4"/>
<rect x="16" y="342" width="1" height="1" fill="#c4c4c4"/><rect x="16" y="344" width="1" height="1" fill="#c4c4c4"/>
<rect x="19" y="104" width="1" height="1" fill="#c4c4c4"/><rect x="19" y="106" width="1" height="1" fill="#c4c4c4"/>
<rect x="19" y="342" width="1" height="1" fill="#c4c4c4"/><rect x="19" y="344" width="1" height="1" fill="#c4c4c4"/>
<rect x="22" y="104" width="1" height="1" fill="#c4c4c4"/><rect x="22" y="106" width="1" height="1" fill="#c4c4c4"/>
<rect x="22" y="342" width="1" height="1" fill="#c4c4c4"/><rect x="22" y="344" width="1" height="1" fill="#c4c4c4"/>
<path d="M9,116 L22.7,130" stroke="#555" stroke-width="1.1" fill="none"/>
<path d="M22,130 H26 L24,132.5 Z" fill="#333"/>
<circle cx="15.3" cy="147.3" r="6.8" stroke="#555" stroke-width="1.1" fill="none"/>
<path d="M22,155 H26 L24,157.5 Z" fill="#333"/>
<path d="M9.5,170 C11,165 15,166 15,170 C15,174 14,179 16,179 C18,179 17,167 20,167 C22.5,167 22.5,174 22,178" stroke="#555" stroke-width="1.1" fill="none"/>
<path d="M22,180 H26 L24,182.5 Z" fill="#333"/>
<ellipse cx="15.5" cy="197.3" rx="7.5" ry="5" transform="rotate(-50 15.5 197.3)" stroke="#555" stroke-width="1.1" fill="none"/>
<path d="M22,205 H26 L24,207.5 Z" fill="#333"/>
<path d="M10,218.5 C10,223 11,225.8 15,225.8 H22" stroke="#555" stroke-width="1.1" fill="none"/>
<path d="M22,230 H26 L24,232.5 Z" fill="#333"/>
<rect x="9.5" y="241.5" width="12.5" height="6.5" fill="#fafafa" stroke="#555" stroke-width="1"/>
<path d="M10.5,248 L15.5,253.5 M12,248.5 L16.5,249.5 L15.5,253.5" stroke="#555" stroke-width="1" fill="#fff"/>
<circle cx="10" cy="247.8" r="1.6" fill="#0af77d" stroke="#117a3c" stroke-width="0.5"/>
<path d="M22,255 H26 L24,257.5 Z" fill="#333"/>
<text x="12.8" y="272.3" style="font-family:Liberation Sans;font-size:6.5px;font-weight:bold;fill:#222">A</text>
<path d="M9,270 V279 M22,270 V279 M9,274.5 H22" stroke="#444" stroke-width="0.9"/>
<path d="M9.5,274.5 L12.5,273 V276 Z M21.5,274.5 L18.5,273 V276 Z" fill="#1aa457"/>
<path d="M22,280 H26 L24,282.5 Z" fill="#333"/>
<path d="M19.5,291.5 A6.3,6.3 0 1 0 21.5,295" stroke="#555" stroke-width="1.1" fill="none"/><path d="M19,289 L21.5,291.5 L18,292.5 Z" fill="#555"/>
<path d="M15.5,293 V300.5 M11.8,296.7 H19.2" stroke="#1aa457" stroke-width="1.6"/><circle cx="15.5" cy="296.7" r="1.5" fill="#0af77d"/>
<path d="M22,304 H26 L24,306.5 Z" fill="#333"/>
<path d="M9,316.5 V321.5 M22,316.5 V321.5 M9,319 H22" stroke="#444" stroke-width="0.9"/>
<path d="M9.5,319 L12.5,317.5 V320.5 Z M21.5,319 L18.5,317.5 V320.5 Z" fill="#1aa457"/>
<rect x="9" y="323.5" width="13" height="5" fill="#0af77d" stroke="#117a3c" stroke-width="0.6"/>
<path d="M11,326.5 V328 M13,327 V328 M15,326.5 V328 M17,327 V328 M19,326.5 V328" stroke="#117a3c" stroke-width="0.5"/>
<path d="M22,330 H26 L24,332.5 Z" fill="#333"/>
<text x="8.5" y="366" style="font-family:Liberation Sans;font-size:14.5px;fill:#111">A</text>
<path d="M19.5,355.5 H22.5 M21,355.5 V366 M19.5,366 H22.5" stroke="#333" stroke-width="0.9"/>
<rect x="8.5" y="378" width="14" height="14" fill="#e9e9e9" stroke="#9a9a9a" stroke-width="0.9"/>
<path d="M8.5,383 L13.5,378 M8.5,388 L18.5,378 M10.5,392 L22.5,380 M15.5,392 L22.5,385 M20.5,392 L22.5,390" stroke="#9a9a9a" stroke-width="0.9"/>
<rect x="9.5" y="405.5" width="12" height="7.5" fill="#fff" stroke="#555" stroke-width="0.9"/><path d="M13,405.5 L14,404 H17 L18,405.5" fill="none" stroke="#555" stroke-width="0.9"/>
<circle cx="15.6" cy="409.3" r="2.6" fill="#0af77d" stroke="#117a3c" stroke-width="0.5"/>
<rect x="10.5" y="429.5" width="11" height="6.5" rx="1.2" fill="none" stroke="#555" stroke-width="0.9"/>
<circle cx="11.3" cy="437.5" r="2.8" fill="#f6f6f6" stroke="#555" stroke-width="0.9"/>
<circle cx="21.3" cy="436.5" r="1.8" fill="#0af77d" stroke="#117a3c" stroke-width="0.5"/>
<circle cx="15.6" cy="459.7" r="1.9" fill="#1fbf66"/>
<rect x="4" y="683" width="1" height="1" fill="#c8c8c8"/><rect x="6" y="683" width="1" height="1" fill="#c8c8c8"/>
<rect x="389" y="683" width="1" height="1" fill="#c8c8c8"/><rect x="391" y="683" width="1" height="1" fill="#c8c8c8"/>
<rect x="530" y="683" width="1" height="1" fill="#c8c8c8"/><rect x="532" y="683" width="1" height="1" fill="#c8c8c8"/>
<rect x="4" y="686" width="1" height="1" fill="#c8c8c8"/><rect x="6" y="686" width="1" height="1" fill="#c8c8c8"/>
<rect x="389" y="686" width="1" height="1" fill="#c8c8c8"/><rect x="391" y="686" width="1" height="1" fill="#c8c8c8"/>
<rect x="530" y="686" width="1" height="1" fill="#c8c8c8"/><rect x="532" y="686" width="1" height="1" fill="#c8c8c8"/>
<rect x="4" y="689" width="1" height="1" fill="#c8c8c8"/><rect x="6" y="689" width="1" height="1" fill="#c8c8c8"/>
<rect x="389" y="689" width="1" height="1" fill="#c8c8c8"/><rect x="391" y="689" width="1" height="1" fill="#c8c8c8"/>
<rect x="530" y="689" width="1" height="1" fill="#c8c8c8"/><rect x="532" y="689" width="1" height="1" fill="#c8c8c8"/>
<rect x="4" y="692" width="1" height="1" fill="#c8c8c8"/><rect x="6" y="692" width="1" height="1" fill="#c8c8c8"/>
<rect x="389" y="692" width="1" height="1" fill="#c8c8c8"/><rect x="391" y="692" width="1" height="1" fill="#c8c8c8"/>
<rect x="530" y="692" width="1" height="1" fill="#c8c8c8"/><rect x="532" y="692" width="1" height="1" fill="#c8c8c8"/>
<rect x="4" y="695" width="1" height="1" fill="#c8c8c8"/><rect x="6" y="695" width="1" height="1" fill="#c8c8c8"/>
<rect x="389" y="695" width="1" height="1" fill="#c8c8c8"/><rect x="391" y="695" width="1" height="1" fill="#c8c8c8"/>
<rect x="530" y="695" width="1" height="1" fill="#c8c8c8"/><rect x="532" y="695" width="1" height="1" fill="#c8c8c8"/>
<rect x="4" y="698" width="1" height="1" fill="#c8c8c8"/><rect x="6" y="698" width="1" height="1" fill="#c8c8c8"/>
<rect x="389" y="698" width="1" height="1" fill="#c8c8c8"/><rect x="391" y="698" width="1" height="1" fill="#c8c8c8"/>
<rect x="530" y="698" width="1" height="1" fill="#c8c8c8"/><rect x="532" y="698" width="1" height="1" fill="#c8c8c8"/>
<text x="16.3" y="695.6" style="font-family:Liberation Sans;font-size:11px;fill:#222">Ex</text>
<path d="M41,691 H55 M48,684 V698" stroke="#888" stroke-width="0.9" stroke-dasharray="1.5,1"/><circle cx="48" cy="691" r="1.2" fill="#999"/>
<circle cx="69.4" cy="685.4" r="1.5" fill="#22b35f" stroke="#0e7a3c" stroke-width="0.5"/>
<circle cx="69.4" cy="689.8" r="1.5" fill="#22b35f" stroke="#0e7a3c" stroke-width="0.5"/>
<circle cx="69.4" cy="694.1999999999999" r="1.5" fill="#22b35f" stroke="#0e7a3c" stroke-width="0.5"/>
<circle cx="69.4" cy="698.6" r="1.5" fill="#22b35f" stroke="#0e7a3c" stroke-width="0.5"/>
<circle cx="74.4" cy="685.4" r="1.5" fill="#22b35f" stroke="#0e7a3c" stroke-width="0.5"/>
<circle cx="74.4" cy="689.8" r="1.5" fill="#22b35f" stroke="#0e7a3c" stroke-width="0.5"/>
<circle cx="74.4" cy="694.1999999999999" r="1.5" fill="#22b35f" stroke="#0e7a3c" stroke-width="0.5"/>
<circle cx="74.4" cy="698.6" r="1.5" fill="#22b35f" stroke="#0e7a3c" stroke-width="0.5"/>
<circle cx="79.4" cy="685.4" r="1.5" fill="#22b35f" stroke="#0e7a3c" stroke-width="0.5"/>
<circle cx="79.4" cy="689.8" r="1.5" fill="#22b35f" stroke="#0e7a3c" stroke-width="0.5"/>
<circle cx="79.4" cy="694.1999999999999" r="1.5" fill="#22b35f" stroke="#0e7a3c" stroke-width="0.5"/>
<circle cx="79.4" cy="698.6" r="1.5" fill="#22b35f" stroke="#0e7a3c" stroke-width="0.5"/>
<path d="M97,684.7 C101,687 104,690 106.6,694.3 M93.8,688.5 C97,689.5 101,693 102.9,697.3" stroke="#666" stroke-width="0.9" fill="none"/>
<circle cx="97" cy="684.7" r="1.9" fill="#22b35f" stroke="#0e7a3c" stroke-width="0.5"/>
<circle cx="93.8" cy="688.5" r="1.9" fill="#22b35f" stroke="#0e7a3c" stroke-width="0.5"/>
<circle cx="106.6" cy="694.3" r="1.9" fill="#22b35f" stroke="#0e7a3c" stroke-width="0.5"/>
<circle cx="102.9" cy="697.3" r="1.9" fill="#22b35f" stroke="#0e7a3c" stroke-width="0.5"/>
<path d="M122.6,684.5 L132.2,694 M119,689 L127.9,698" stroke="#666" stroke-width="0.9" fill="none"/>
<circle cx="122.6" cy="684.5" r="1.6" fill="#22b35f" stroke="#0e7a3c" stroke-width="0.5"/>
<circle cx="119" cy="689" r="1.6" fill="#22b35f" stroke="#0e7a3c" stroke-width="0.5"/>
<circle cx="125.8" cy="688" r="1.6" fill="#22b35f" stroke="#0e7a3c" stroke-width="0.5"/>
<circle cx="129" cy="691" r="1.6" fill="#22b35f" stroke="#0e7a3c" stroke-width="0.5"/>
<circle cx="125.5" cy="691.7" r="1.6" fill="#22b35f" stroke="#0e7a3c" stroke-width="0.5"/>
<circle cx="132.2" cy="694" r="1.6" fill="#22b35f" stroke="#0e7a3c" stroke-width="0.5"/>
<circle cx="127.9" cy="698" r="1.6" fill="#22b35f" stroke="#0e7a3c" stroke-width="0.5"/>
<path d="M144.5,688 C149,689 153,693 154,698.5 M148.5,684 L159,694" stroke="#666" stroke-width="0.9" fill="none"/>
<circle cx="145.5" cy="697" r="1.9" fill="#22b35f" stroke="#0e7a3c" stroke-width="0.5"/>
<circle cx="153.8" cy="689" r="1.9" fill="#22b35f" stroke="#0e7a3c" stroke-width="0.5"/>
<path d="M170.5,688 C175,688 178,692 179,698 M174,684 L184.5,694.5" stroke="#666" stroke-width="0.9" fill="none"/>
<circle cx="179.4" cy="688.8" r="1.9" fill="#22b35f" stroke="#0e7a3c" stroke-width="0.5"/>
<circle cx="177" cy="691.7" r="1.9" fill="#22b35f" stroke="#0e7a3c" stroke-width="0.5"/>
<path d="M195,690 C199,690 202,694 203,698.5 M199,684 L210,695" stroke="#666" stroke-width="0.9" fill="none"/>
<circle cx="203" cy="688" r="1.9" fill="#22b35f" stroke="#0e7a3c" stroke-width="0.5"/>
<circle cx="204.2" cy="694.5" r="1.9" fill="#22b35f" stroke="#0e7a3c" stroke-width="0.5"/>
<path d="M206.5,688 L210,686 V690 Z M200.5,694.5 L197,692.5 V696.5 Z" fill="#22b35f"/>
<path d="M223.4,685.8 L234.6,697 M234.6,685.8 L223.4,697" stroke="#555" stroke-width="0.9"/>
<circle cx="229" cy="691.4" r="1.6" fill="#22b35f" stroke="#0e7a3c" stroke-width="0.5"/>
<rect x="252.8" y="689" width="14.4" height="5.3" fill="#8ef0b8"/><path d="M252.8,691.6 H267.2" stroke="#555" stroke-width="0.9"/>
<circle cx="260" cy="691.6" r="1.6" fill="#22b35f" stroke="#0e7a3c" stroke-width="0.5"/>
<rect x="283.2" y="684.2" width="4.8" height="14.4" fill="#8ef0b8"/><path d="M285.6,684.2 V698.6" stroke="#555" stroke-width="0.9"/>
<circle cx="285.6" cy="691.6" r="1.6" fill="#22b35f" stroke="#0e7a3c" stroke-width="0.5"/>
<rect x="304" y="689" width="14.4" height="5.3" fill="#8ef0b8"/><rect x="308.8" y="684.2" width="4.8" height="14.4" fill="#8ef0b8"/><path d="M304,691.6 H318.4 M311.2,684.2 V698.6" stroke="#555" stroke-width="0.9"/>
<circle cx="311.2" cy="691.6" r="1.6" fill="#22b35f" stroke="#0e7a3c" stroke-width="0.5"/>
<rect x="244.5" y="683" width="1" height="17" fill="#dadada"/><rect x="327.3" y="683" width="1" height="17" fill="#dadada"/>
<path d="M336.5,697 L342,690.5 L345.5,693.5 L340,700 Z" fill="#fff" stroke="#555" stroke-width="0.9"/>
<path d="M344.8,686.5 L348,689.8 L344.8,693 L341.5,689.8 Z" fill="#168a48" stroke="#0b5a2e" stroke-width="0.5"/><path d="M341,689.8 H349 M344.8,685.5 V694" stroke="#333" stroke-width="0.6"/>
<rect x="360.3" y="686" width="6" height="5.5" fill="#000"/><path d="M361.5,686 V684.5 A1.8,1.8 0 0 1 365,684.5 V686" fill="none" stroke="#000" stroke-width="1"/>
<path d="M365,698.5 L370,692.5 L373.5,695.5 L368.5,701.5 Z" fill="#fff" stroke="#555" stroke-width="0.9"/>
<path d="M372.5,689 L375.7,692.2 L372.5,695.4 L369.3,692.2 Z" fill="#168a48" stroke="#0b5a2e" stroke-width="0.5"/><path d="M368.8,692.2 H376.6 M372.5,688 V696.4" stroke="#333" stroke-width="0.6"/>
<rect x="400.9" y="685.5" width="13" height="9.5" fill="#f4f4f4" stroke="#555" stroke-width="1"/>
<rect x="405.9" y="695" width="3" height="1.5" fill="#444"/><rect x="403.9" y="696.3" width="7" height="1.2" fill="#444"/>
<rect x="401.4" y="686" width="3.6" height="8.5" fill="#0af77d"/>
<rect x="426.5" y="685.5" width="13" height="9.5" fill="#f4f4f4" stroke="#555" stroke-width="1"/>
<rect x="431.5" y="695" width="3" height="1.5" fill="#444"/><rect x="429.5" y="696.3" width="7" height="1.2" fill="#444"/>
<rect x="435.4" y="686" width="3.6" height="8.5" fill="#0af77d"/>
<rect x="452.5" y="685.5" width="13" height="9.5" fill="#f4f4f4" stroke="#555" stroke-width="1"/>
<rect x="457.5" y="695" width="3" height="1.5" fill="#444"/><rect x="455.5" y="696.3" width="7" height="1.2" fill="#444"/>
<rect x="453" y="686" width="12" height="3" fill="#0af77d"/>
<rect x="478.5" y="685.5" width="13" height="9.5" fill="#f4f4f4" stroke="#555" stroke-width="1"/>
<rect x="483.5" y="695" width="3" height="1.5" fill="#444"/><rect x="481.5" y="696.3" width="7" height="1.2" fill="#444"/>
<rect x="479" y="691.5" width="12" height="3" fill="#0af77d"/>
<rect x="504.1" y="685.5" width="13" height="9.5" fill="#f4f4f4" stroke="#555" stroke-width="1"/>
<rect x="509.1" y="695" width="3" height="1.5" fill="#444"/><rect x="507.1" y="696.3" width="7" height="1.2" fill="#444"/>
<rect x="506.6" y="687.5" width="5.5" height="4" fill="#0af77d"/>
<path d="M540.4,691.3 H547 M543.7,688 V694.6" stroke="#000" stroke-width="1.8"/>
<rect x="549.5" y="684.5" width="7" height="14" fill="#fafafa" stroke="#777" stroke-width="0.9"/><path d="M551,687.5 H555 M551,690 H555 M551,692.5 H555 M551,695 H555" stroke="#888" stroke-width="0.7"/>
<path d="M566,691.3 H572.6 M569.3,688 V694.6" stroke="#000" stroke-width="1.8"/>
<rect x="574.5" y="684.5" width="7.5" height="14" fill="#fafafa" stroke="#777" stroke-width="0.9"/><path d="M574.5,691.5 H582 M575.5,689.5 L580.5,685.5" stroke="#777" stroke-width="0.7"/><circle cx="578.2" cy="695" r="2" fill="none" stroke="#777" stroke-width="0.7"/>
<rect x="574.8" y="684.8" width="7" height="13.5" fill="none" stroke="#0af77d" stroke-width="0.6" opacity="0.6"/>
<path d="M790,457.2 Q795.2,452 800.4,457.2 Q795.2,462.4 790,457.2 Z" fill="#12c462" stroke="#1a1a1a" stroke-width="1.1"/><circle cx="795.2" cy="457.2" r="1.2" fill="#111"/>
<path d="M821,457.2 Q826.2,452 831.4,457.2 Q826.2,462.4 821,457.2 Z" fill="#b0b0b0" stroke="#a0a0a0" stroke-width="1"/><circle cx="826.2" cy="457.2" r="1.1" fill="#999"/>
<rect x="853" y="456" width="9" height="7" fill="#d4d4d4"/><path d="M854.5,456 V453.5 A3,3 0 0 1 860.5,453.5 V456" fill="none" stroke="#d4d4d4" stroke-width="1.3"/>
<rect x="884" y="456" width="9" height="7" fill="#000"/><path d="M885.5,456 V453.5 A3,3 0 0 1 891.5,453.5 V456" fill="none" stroke="#000" stroke-width="1.3"/>
<path d="M920.3,451 V463.5 M914,457.2 H926.6" stroke="#0e7a3c" stroke-width="5"/><path d="M920.3,451.5 V463 M914.5,457.2 H926" stroke="#0af77d" stroke-width="3.6"/>
<rect x="945" y="454.5" width="12" height="5" fill="#0af77d" stroke="#0e7a3c" stroke-width="0.8"/>
<path d="M977,461 L983,453 L987,456 L981,464 Z" fill="#0af77d" stroke="#0e7a3c" stroke-width="0.8"/><path d="M976.5,462 L979,463.5" stroke="#333" stroke-width="1.2"/>
<path d="M784,480.8 Q789,476.2 794,480.8 Q789,485.40000000000003 784,480.8 Z" fill="#12c462" stroke="#1a1a1a" stroke-width="1.1"/><circle cx="789" cy="480.8" r="1.1" fill="#1a1a1a"/>
<rect x="807.5" y="479.3" width="8" height="6" fill="#d4d4d4"/><path d="M809,479.3 V477.3 A2.6,2.6 0 0 1 814.2,477.3 V479.3" fill="none" stroke="#d4d4d4" stroke-width="1.2"/>
<rect x="830.8" y="475.6" width="5" height="4" fill="#0af77d" stroke="#111" stroke-width="0.6"/><rect x="828.5" y="478.8" width="9.5" height="5" rx="0.8" fill="#0b0b0b"/><rect x="830.3" y="479.90000000000003" width="6" height="1.3" fill="#fff"/><rect x="830.5" y="482.1" width="5.5" height="3.2" fill="#0af77d" stroke="#111" stroke-width="0.5"/>
<path d="M850.5,478.5 H859.5 M850.5,483.1 H859.5 M853.5,475.3 V486.3 M857,475.3 V486.3" stroke="#7a7a7a" stroke-width="1.7"/>
<path d="M784,495.7 Q789,491.09999999999997 794,495.7 Q789,500.3 784,495.7 Z" fill="#a8a8a8" stroke="#9a9a9a" stroke-width="1.1"/><circle cx="789" cy="495.7" r="1.1" fill="#9a9a9a"/>
<rect x="807.5" y="494.2" width="8" height="6" fill="#d4d4d4"/><path d="M809,494.2 V492.2 A2.6,2.6 0 0 1 814.2,492.2 V494.2" fill="none" stroke="#d4d4d4" stroke-width="1.2"/>
<rect x="830.8" y="490.5" width="5" height="4" fill="#0af77d" stroke="#111" stroke-width="0.6"/><rect x="828.5" y="493.7" width="9.5" height="5" rx="0.8" fill="#0b0b0b"/><rect x="830.3" y="494.8" width="6" height="1.3" fill="#fff"/><rect x="830.5" y="497.0" width="5.5" height="3.2" fill="#0af77d" stroke="#111" stroke-width="0.5"/>
<path d="M850.5,493.4 H859.5 M850.5,498.0 H859.5 M853.5,490.2 V501.2 M857,490.2 V501.2" stroke="#0d8a45" stroke-width="2.6"/>
<path d="M851,493.4 H859 M851,498.0 H859 M853.5,490.7 V500.7 M857,490.7 V500.7" stroke="#0af77d" stroke-width="1.5"/>
<path d="M784,510.6 Q789,506.0 794,510.6 Q789,515.2 784,510.6 Z" fill="#12c462" stroke="#1a1a1a" stroke-width="1.1"/><circle cx="789" cy="510.6" r="1.1" fill="#1a1a1a"/>
<rect x="807.5" y="509.1" width="8" height="6" fill="#d4d4d4"/><path d="M809,509.1 V507.1 A2.6,2.6 0 0 1 814.2,507.1 V509.1" fill="none" stroke="#d4d4d4" stroke-width="1.2"/>
<rect x="830.8" y="505.40000000000003" width="5" height="4" fill="#0af77d" stroke="#111" stroke-width="0.6"/><rect x="828.5" y="508.6" width="9.5" height="5" rx="0.8" fill="#0b0b0b"/><rect x="830.3" y="509.70000000000005" width="6" height="1.3" fill="#fff"/><rect x="830.5" y="511.90000000000003" width="5.5" height="3.2" fill="#0af77d" stroke="#111" stroke-width="0.5"/>
<path d="M850.5,508.3 H859.5 M850.5,512.9 H859.5 M853.5,505.1 V516.1 M857,505.1 V516.1" stroke="#7a7a7a" stroke-width="1.7"/>
<path d="M784,525.5 Q789,520.9 794,525.5 Q789,530.1 784,525.5 Z" fill="#12c462" stroke="#1a1a1a" stroke-width="1.1"/><circle cx="789" cy="525.5" r="1.1" fill="#1a1a1a"/>
<rect x="807.5" y="524.0" width="8" height="6" fill="#d4d4d4"/><path d="M809,524.0 V522.0 A2.6,2.6 0 0 1 814.2,522.0 V524.0" fill="none" stroke="#d4d4d4" stroke-width="1.2"/>
<rect x="830.8" y="520.3" width="5" height="4" fill="#0af77d" stroke="#111" stroke-width="0.6"/><rect x="828.5" y="523.5" width="9.5" height="5" rx="0.8" fill="#0b0b0b"/><rect x="830.3" y="524.6" width="6" height="1.3" fill="#fff"/><rect x="830.5" y="526.8" width="5.5" height="3.2" fill="#0af77d" stroke="#111" stroke-width="0.5"/>
<path d="M850.5,523.2 H859.5 M850.5,527.8 H859.5 M853.5,520.0 V531.0 M857,520.0 V531.0" stroke="#7a7a7a" stroke-width="1.7"/>
<path d="M784,540.4 Q789,535.8 794,540.4 Q789,545.0 784,540.4 Z" fill="#12c462" stroke="#1a1a1a" stroke-width="1.1"/><circle cx="789" cy="540.4" r="1.1" fill="#1a1a1a"/>
<rect x="807.5" y="538.9" width="8" height="6" fill="#d4d4d4"/><path d="M809,538.9 V536.9 A2.6,2.6 0 0 1 814.2,536.9 V538.9" fill="none" stroke="#d4d4d4" stroke-width="1.2"/>
<rect x="830.8" y="535.1999999999999" width="5" height="4" fill="#0af77d" stroke="#111" stroke-width="0.6"/><rect x="828.5" y="538.4" width="9.5" height="5" rx="0.8" fill="#0b0b0b"/><rect x="830.3" y="539.5" width="6" height="1.3" fill="#fff"/><rect x="830.5" y="541.6999999999999" width="5.5" height="3.2" fill="#0af77d" stroke="#111" stroke-width="0.5"/>
<path d="M850.5,538.1 H859.5 M850.5,542.6999999999999 H859.5 M853.5,534.9 V545.9 M857,534.9 V545.9" stroke="#7a7a7a" stroke-width="1.7"/>
<path d="M784,555.3 Q789,550.6999999999999 794,555.3 Q789,559.9 784,555.3 Z" fill="#12c462" stroke="#1a1a1a" stroke-width="1.1"/><circle cx="789" cy="555.3" r="1.1" fill="#1a1a1a"/>
<rect x="807.5" y="553.8" width="8" height="6" fill="#d4d4d4"/><path d="M809,553.8 V551.8 A2.6,2.6 0 0 1 814.2,551.8 V553.8" fill="none" stroke="#d4d4d4" stroke-width="1.2"/>
<rect x="830.8" y="550.0999999999999" width="5" height="4" fill="#0af77d" stroke="#111" stroke-width="0.6"/><rect x="828.5" y="553.3" width="9.5" height="5" rx="0.8" fill="#0b0b0b"/><rect x="830.3" y="554.4" width="6" height="1.3" fill="#fff"/><rect x="830.5" y="556.5999999999999" width="5.5" height="3.2" fill="#0af77d" stroke="#111" stroke-width="0.5"/>
<path d="M850.5,553.0 H859.5 M850.5,557.5999999999999 H859.5 M853.5,549.8 V560.8 M857,549.8 V560.8" stroke="#7a7a7a" stroke-width="1.7"/>
<path d="M396.3,717 C400,720 403,721.5 406,720.8 C409,720 411,714 411.6,709.8" fill="none" stroke="#111" stroke-width="1.7"/>
<path d="M414.8,749 V718 Q414.8,713.2 419.6,713.2 H439.2 Q444,713.2 444,718 V749" fill="#fff" stroke="#111" stroke-width="1.8"/>
<rect x="425" y="713.8" width="8.6" height="14.4" fill="#0af77d"/>
<path d="M414.8,728.8 H444 M424.3,713.2 V728.8 M434,713.2 V728.8 M429.2,709.3 V713.2" stroke="#111" stroke-width="1.5"/>
<rect x="12.5" y="11" width="3" height="5" fill="none" stroke="#3f4e5c" stroke-width="1.3"/>
<path d="M929,15.2 H933" stroke="#3b4a55" stroke-width="1.6"/>
<rect x="956.2" y="12" width="4.6" height="4.2" fill="none" stroke="#3b4a55" stroke-width="1.4"/>
<path d="M983.3,11.3 L988.2,16.2 M988.2,11.3 L983.3,16.2" stroke="#3b4a55" stroke-width="1.5"/>
<path d="M1.5,30 H7.5 L9.5,32 V40.5 H1.5 Z" fill="#fafafa" stroke="#7a7a7a" stroke-width="0.8"/>
<circle cx="7" cy="35.8" r="2" fill="none" stroke="#222" stroke-width="1"/><path d="M8.5,37.3 L11,40" stroke="#111" stroke-width="1.4"/>
</svg>
</body></html>
